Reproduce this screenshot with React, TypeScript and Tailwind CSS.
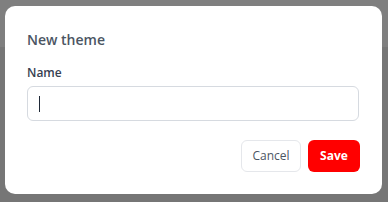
export default function App() {
  return (
    <div
      className="h-[202px] w-[388px] overflow-hidden bg-[linear-gradient(#7f7f7f_47px,#767676_47px)] pl-[5px] pt-[6px]"
      style={{ fontFamily: '"Open Sans", "Noto Sans", sans-serif' }}
    >
      <div className="flex h-[188px] w-[377px] flex-col rounded-[10px] bg-white px-[22px] pt-[24px]">
        <h2 className="text-[14px] font-semibold leading-[20px] text-[#4b5563]">New theme</h2>

        <label className="mt-[15px] text-[12px] font-semibold leading-[16px] text-[#374151]">Name</label>
        <div className="mt-[5px] flex h-[35px] w-[332px] items-center rounded-[6px] border border-[#d6dae0] px-[11px]">
          <span className="h-[16px] w-px bg-[#1f2937]" />
        </div>

        <div className="mt-[19px] flex justify-end gap-[7px]">
          <button className="h-[32px] w-[60px] rounded-[6px] border border-[#e5e7eb] bg-white text-[12px] leading-none text-[#4b5563]">
            Cancel
          </button>
          <button className="h-[32px] w-[52px] rounded-[6px] bg-[#ff0000] text-[12px] font-bold leading-none text-white">
            Save
          </button>
        </div>
      </div>
    </div>
  );
}
